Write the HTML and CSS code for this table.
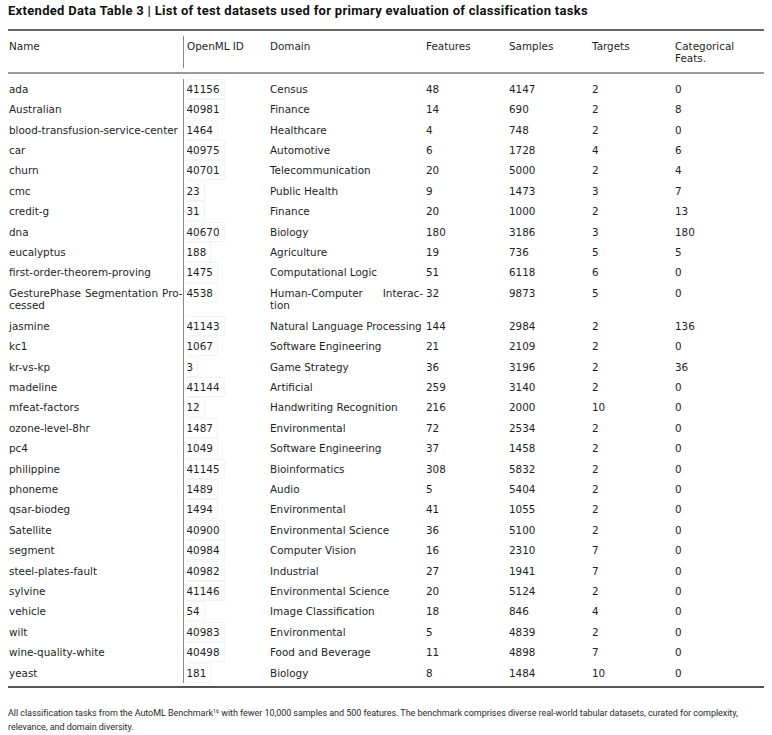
FILE: index.html
```html
<!DOCTYPE html>
<html lang="en">
<head>
<meta charset="utf-8">
<title>Extended Data Table 3</title>
<link rel="stylesheet" href="styles.css">
</head>
<body>
<div class="page">
  <h1 class="title">Extended Data Table 3 | List of test datasets used for primary evaluation of classification tasks</h1>
  <table class="data">
    <colgroup>
      <col class="c-name"><col class="c-id"><col class="c-dom"><col class="c-num"><col class="c-num"><col class="c-num"><col class="c-cat">
    </colgroup>
    <thead>
      <tr>
        <th class="name">Name</th>
        <th class="idh"><div class="idh-in">OpenML ID</div></th>
        <th>Domain</th>
        <th>Features</th>
        <th>Samples</th>
        <th>Targets</th>
        <th>Categorical<br>Feats.</th>
      </tr>
    </thead>
    <tbody>
      <tr class="spacer top"><td colspan="7"></td></tr>
      <tr><td class="name">ada</td><td class="id"><span class="box">41156</span></td><td>Census</td><td>48</td><td>4147</td><td>2</td><td>0</td></tr>
      <tr><td class="name">Australian</td><td class="id"><span class="box">40981</span></td><td>Finance</td><td>14</td><td>690</td><td>2</td><td>8</td></tr>
      <tr><td class="name">blood-transfusion-service-center</td><td class="id"><span class="box">1464</span></td><td>Healthcare</td><td>4</td><td>748</td><td>2</td><td>0</td></tr>
      <tr><td class="name">car</td><td class="id"><span class="box">40975</span></td><td>Automotive</td><td>6</td><td>1728</td><td>4</td><td>6</td></tr>
      <tr><td class="name">churn</td><td class="id"><span class="box">40701</span></td><td>Telecommunication</td><td>20</td><td>5000</td><td>2</td><td>4</td></tr>
      <tr><td class="name">cmc</td><td class="id"><span class="box">23</span></td><td>Public Health</td><td>9</td><td>1473</td><td>3</td><td>7</td></tr>
      <tr><td class="name">credit-g</td><td class="id"><span class="box">31</span></td><td>Finance</td><td>20</td><td>1000</td><td>2</td><td>13</td></tr>
      <tr><td class="name">dna</td><td class="id"><span class="box">40670</span></td><td>Biology</td><td>180</td><td>3186</td><td>3</td><td>180</td></tr>
      <tr><td class="name">eucalyptus</td><td class="id"><span class="box">188</span></td><td>Agriculture</td><td>19</td><td>736</td><td>5</td><td>5</td></tr>
      <tr><td class="name">first-order-theorem-proving</td><td class="id"><span class="box">1475</span></td><td>Computational Logic</td><td>51</td><td>6118</td><td>6</td><td>0</td></tr>
      <tr><td class="name wrap"><span class="jl">GesturePhase Segmentation Pro-</span><span class="ll">cessed</span></td><td class="id"><span class="box">4538</span></td><td class="wrap"><span class="jl">Human-Computer Interac-</span><span class="ll">tion</span></td><td>32</td><td>9873</td><td>5</td><td>0</td></tr>
      <tr><td class="name">jasmine</td><td class="id"><span class="box">41143</span></td><td>Natural Language Processing</td><td>144</td><td>2984</td><td>2</td><td>136</td></tr>
      <tr><td class="name">kc1</td><td class="id"><span class="box">1067</span></td><td>Software Engineering</td><td>21</td><td>2109</td><td>2</td><td>0</td></tr>
      <tr><td class="name">kr-vs-kp</td><td class="id"><span class="box">3</span></td><td>Game Strategy</td><td>36</td><td>3196</td><td>2</td><td>36</td></tr>
      <tr><td class="name">madeline</td><td class="id"><span class="box">41144</span></td><td>Artificial</td><td>259</td><td>3140</td><td>2</td><td>0</td></tr>
      <tr><td class="name">mfeat-factors</td><td class="id"><span class="box">12</span></td><td>Handwriting Recognition</td><td>216</td><td>2000</td><td>10</td><td>0</td></tr>
      <tr><td class="name">ozone-level-8hr</td><td class="id"><span class="box">1487</span></td><td>Environmental</td><td>72</td><td>2534</td><td>2</td><td>0</td></tr>
      <tr><td class="name">pc4</td><td class="id"><span class="box">1049</span></td><td>Software Engineering</td><td>37</td><td>1458</td><td>2</td><td>0</td></tr>
      <tr><td class="name">philippine</td><td class="id"><span class="box">41145</span></td><td>Bioinformatics</td><td>308</td><td>5832</td><td>2</td><td>0</td></tr>
      <tr><td class="name">phoneme</td><td class="id"><span class="box">1489</span></td><td>Audio</td><td>5</td><td>5404</td><td>2</td><td>0</td></tr>
      <tr><td class="name">qsar-biodeg</td><td class="id"><span class="box">1494</span></td><td>Environmental</td><td>41</td><td>1055</td><td>2</td><td>0</td></tr>
      <tr><td class="name">Satellite</td><td class="id"><span class="box">40900</span></td><td>Environmental Science</td><td>36</td><td>5100</td><td>2</td><td>0</td></tr>
      <tr><td class="name">segment</td><td class="id"><span class="box">40984</span></td><td>Computer Vision</td><td>16</td><td>2310</td><td>7</td><td>0</td></tr>
      <tr><td class="name">steel-plates-fault</td><td class="id"><span class="box">40982</span></td><td>Industrial</td><td>27</td><td>1941</td><td>7</td><td>0</td></tr>
      <tr><td class="name">sylvine</td><td class="id"><span class="box">41146</span></td><td>Environmental Science</td><td>20</td><td>5124</td><td>2</td><td>0</td></tr>
      <tr><td class="name">vehicle</td><td class="id"><span class="box">54</span></td><td>Image Classification</td><td>18</td><td>846</td><td>4</td><td>0</td></tr>
      <tr><td class="name">wilt</td><td class="id"><span class="box">40983</span></td><td>Environmental</td><td>5</td><td>4839</td><td>2</td><td>0</td></tr>
      <tr><td class="name">wine-quality-white</td><td class="id"><span class="box">40498</span></td><td>Food and Beverage</td><td>11</td><td>4898</td><td>7</td><td>0</td></tr>
      <tr><td class="name">yeast</td><td class="id"><span class="box">181</span></td><td>Biology</td><td>8</td><td>1484</td><td>10</td><td>0</td></tr>
      <tr class="spacer bottom"><td colspan="7"></td></tr>
    </tbody>
  </table>
  <p class="note">All classification tasks from the AutoML Benchmark<sup>16</sup> with fewer 10,000 samples and 500 features. The benchmark comprises diverse real-world tabular datasets, curated for complexity,<br>relevance, and domain diversity.</p>
</div>
</body>
</html>
```
FILE: styles.css
```css
html, body {
  margin: 0;
  padding: 0;
  background: #ffffff;
}

.page {
  padding: 3px 8px 0 8px;
  color: #1c1c1c;
}

.title {
  margin: 0 0 10px 0;
  font-family: Roboto, "Liberation Sans", sans-serif;
  font-weight: 700;
  font-size: 13px;
  line-height: 16px;
  letter-spacing: 0.3px;
  color: #111;
  white-space: nowrap;
}

.data {
  width: 756px;
  table-layout: fixed;
  border-collapse: collapse;
  font-family: "DejaVu Sans", sans-serif;
  font-size: 10.4px;
  line-height: 12.4px;
  color: #1e1e1e;
  border-top: 2px solid #666;
  border-bottom: 2px solid #555;
}

.c-name { width: 175px; }
.c-id { width: 84px; }
.c-dom { width: 156px; }
.c-num { width: 83px; }
.c-cat { width: 92px; }

.data th {
  font-weight: 400;
  text-align: left;
  vertical-align: top;
  padding: 9px 0 7px 3px;
  border-bottom: 2px solid #9a9a9a;
}

.data th.name { padding-left: 1px; }

.data th.idh {
  padding: 5px 0 3px 0;
}

.idh-in {
  border-left: 1px solid #888;
  height: 28px;
  padding: 4px 0 0 3px;
}

.data td {
  vertical-align: top;
  text-align: left;
  padding: 4px 0 4px 3px;
  white-space: nowrap;
}

.data td.name { padding-left: 1px; padding-right: 0; }

.data td.id {
  border-left: 1px solid #888;
}

.box {
  padding: 3px 4px 3px 0;
  border: 1px solid #f3f3f3;
  border-left: none;
}

.data td.wrap { white-space: normal; }

.jl {
  display: block;
  white-space: nowrap;
  text-align: justify;
  text-align-last: justify;
}

.ll { display: block; }

.data .spacer td {
  padding: 0;
  border: none;
}
.spacer.top td { height: 5px; }
.spacer.bottom td { height: 3px; }

.note {
  margin: 18px 0 0 0;
  font-family: Roboto, "Liberation Sans", sans-serif;
  font-size: 9px;
  line-height: 14px;
  color: #2a2a2a;
  letter-spacing: -0.05px;
  white-space: nowrap;
}

.note sup {
  font-size: 5.5px;
  line-height: 0;
  vertical-align: 3.5px;
}
```
